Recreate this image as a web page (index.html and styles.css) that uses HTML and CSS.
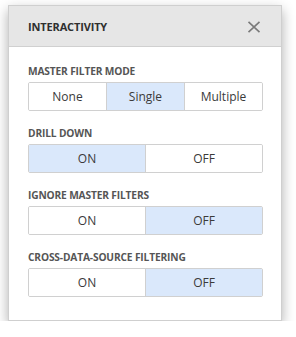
FILE: index.html
```html
<!DOCTYPE html>
<html>
<head>
<meta charset="utf-8">
<link rel="stylesheet" href="styles.css">
</head>
<body>
<div class="panel">
  <div class="header">
    <span class="title">INTERACTIVITY</span>
    <svg class="close" width="14" height="12" viewBox="0 0 14 12"><path d="M1.5 0.8 L12.5 11.2 M12.5 0.8 L1.5 11.2" stroke="#7a7a7a" stroke-width="1.6" fill="none"/></svg>
  </div>
  <div class="content">
    <div class="section">
      <div class="label">MASTER FILTER MODE</div>
      <div class="group">
        <div class="seg">None</div>
        <div class="seg on">Single</div>
        <div class="seg">Multiple</div>
      </div>
    </div>
    <div class="section">
      <div class="label">DRILL DOWN</div>
      <div class="group">
        <div class="seg on">ON</div>
        <div class="seg">OFF</div>
      </div>
    </div>
    <div class="section">
      <div class="label">IGNORE MASTER FILTERS</div>
      <div class="group">
        <div class="seg">ON</div>
        <div class="seg on">OFF</div>
      </div>
    </div>
    <div class="section">
      <div class="label">CROSS-DATA-SOURCE FILTERING</div>
      <div class="group">
        <div class="seg">ON</div>
        <div class="seg on">OFF</div>
      </div>
    </div>
  </div>
</div>
</body>
</html>
```
FILE: styles.css
```css
html, body {
  margin: 0;
  padding: 0;
  background: #ffffff;
}
body {
  font-family: "Open Sans", "Noto Sans", sans-serif;
}
.panel {
  margin: 5px 0 0 8px;
  width: 274px;
  height: 316px;
  box-sizing: border-box;
  border: 1px solid #cfcfcf;
  background: #ffffff;
  box-shadow: 0 5px 12px rgba(0, 0, 0, 0.32);
  display: flex;
  flex-direction: column;
}
.header {
  height: 41px;
  box-sizing: border-box;
  background: #e6e6e6;
  border-bottom: 1px solid #d0d0d0;
  display: flex;
  align-items: center;
  justify-content: space-between;
  padding: 0 20px 0 19px;
}
.title {
  font-size: 11px;
  font-weight: 700;
  color: #2f2f2f;
  letter-spacing: -0.15px;
}
.close {
  display: block;
  margin-top: 1px;
}
.content {
  padding: 15px 18px 0 19px;
}
.section {
  margin-bottom: 13px;
}
.label {
  height: 18px;
  line-height: 18px;
  font-size: 10.2px;
  font-weight: 700;
  color: #555555;
  letter-spacing: -0.15px;
  margin-bottom: 2px;
}
.group {
  display: flex;
  height: 29px;
  box-sizing: border-box;
  border: 1px solid #d0d0d0;
  border-radius: 2px;
  overflow: hidden;
}
.seg {
  flex: 1;
  display: flex;
  align-items: center;
  justify-content: center;
  font-size: 12px;
  color: #3a3a3a;
  background: #ffffff;
}
.seg + .seg {
  border-left: 1px solid #d0d0d0;
}
.seg.on {
  background: #dae8fb;
}
```
